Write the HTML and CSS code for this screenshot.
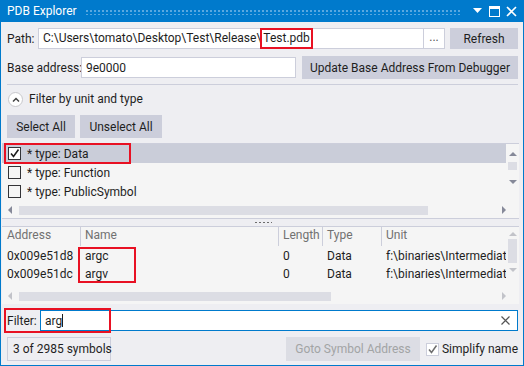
FILE: index.html
```html
<!DOCTYPE html>
<html lang="en">
<head>
    <meta charset="UTF-8">
    <title>PDB Explorer</title>
    <link rel="stylesheet" href="styles.css">
</head>
<body>
    <div class="window">
        <div class="titlebar">
            <span class="title">PDB Explorer</span>
            <span class="grip"></span>
            <span class="tb-icons">
                <svg width="11" height="6" viewBox="0 0 11 6"><path d="M1 0h9l-4.5 5z" fill="#fff"/></svg>
                <svg width="11" height="11" viewBox="0 0 11 11"><rect x="0.5" y="0.5" width="10" height="10" fill="none" stroke="#fff"/><rect x="0" y="0" width="11" height="3" fill="#fff"/></svg>
                <svg width="11" height="11" viewBox="0 0 11 11"><path d="M1 1l9 9M10 1l-9 9" stroke="#fff" stroke-width="1.6"/></svg>
            </span>
        </div>

        <div class="content">
            <div class="row row-path">
                <label class="lbl">Path:</label>
                <div class="textbox path-box">
                    <span class="tb-text">C:\Users\tomato\Desktop\Test\Release\<span class="mark">Test.pdb</span></span>
                    <span class="browse">...</span>
                </div>
                <button class="btn refresh">Refresh</button>
            </div>

            <div class="row row-base">
                <label class="lbl">Base address:</label>
                <div class="textbox base-box"><span class="tb-text">9e0000</span></div>
                <button class="btn update">Update Base Address From Debugger</button>
            </div>

            <div class="sep"></div>

            <div class="expander">
                <span class="exp-circle">
                    <svg width="8" height="5" viewBox="0 0 8 5"><path d="M1 4.5L4 1.5 7 4.5" fill="none" stroke="#444" stroke-width="1.5"/></svg>
                </span>
                <span>Filter by unit and type</span>
            </div>

            <div class="row row-btns">
                <button class="btn">Select All</button>
                <button class="btn">Unselect All</button>
            </div>
        </div>

        <div class="list types">
            <div class="list-body">
                <div class="list-rows">
                    <div class="item selected">
                        <span class="mark-row">
                            <span class="check on">
                                <svg width="11" height="11" viewBox="0 0 11 11"><path d="M2 5.5l2.5 3 5-7" fill="none" stroke="#1e1e1e" stroke-width="1.6"/></svg>
                            </span>
                            * type: Data
                        </span>
                    </div>
                    <div class="item"><span class="check"></span>* type: Function</div>
                    <div class="item"><span class="check"></span>* type: PublicSymbol</div>
                </div>
                <div class="vscroll">
                    <span class="arrow-up"></span>
                    <span class="vthumb small"></span>
                    <span class="vspace"></span>
                    <span class="arrow-down"></span>
                </div>
            </div>
            <div class="hscroll">
                <span class="arrow-left"></span>
                <span class="hthumb wide"></span>
                <span class="arrow-right"></span>
            </div>
        </div>

        <div class="splitter"><span class="dots"></span></div>

        <div class="list grid">
            <div class="list-body">
                <div class="list-rows">
                    <div class="grid-row head">
                        <span class="c-addr">Address</span>
                        <span class="c-name">Name</span>
                        <span class="c-len">Length</span>
                        <span class="c-type">Type</span>
                        <span class="c-unit">Unit</span>
                    </div>
                    <div class="grid-row">
                        <span class="c-addr">0x009e51d8</span>
                        <span class="c-name">argc</span>
                        <span class="c-len">0</span>
                        <span class="c-type">Data</span>
                        <span class="c-unit">f:\binaries\Intermediate</span>
                    </div>
                    <div class="grid-row">
                        <span class="c-addr">0x009e51dc</span>
                        <span class="c-name">argv</span>
                        <span class="c-len">0</span>
                        <span class="c-type">Data</span>
                        <span class="c-unit">f:\binaries\Intermediate</span>
                    </div>
                    <div class="name-mark"></div>
                </div>
                <div class="vscroll grid-v">
                    <span class="arrow-up light"></span>
                    <span class="vthumb tall"></span>
                    <span class="arrow-down light"></span>
                </div>
            </div>
            <div class="hscroll">
                <span class="arrow-left light"></span>
                <span class="hthumb short"></span>
                <span class="arrow-right light"></span>
            </div>
        </div>

        <div class="content bottom">
            <div class="row row-filter">
                <label class="lbl">Filter:</label>
                <div class="textbox filter-box">
                    <span class="tb-text">arg<span class="caret"></span></span>
                    <svg class="clear" width="9" height="9" viewBox="0 0 9 9"><path d="M0.5 0.5l8 8M8.5 0.5l-8 8" stroke="#555" stroke-width="1.2"/></svg>
                </div>
                <div class="filter-mark"></div>
            </div>
            <div class="row row-status">
                <span class="status">3 of 2985 symbols</span>
                <span class="spacer"></span>
                <button class="btn disabled">Goto Symbol Address</button>
                <label class="simplify">
                    <span class="check light">
                        <svg width="11" height="11" viewBox="0 0 11 11"><path d="M2 5.5l2.5 3 5-7" fill="none" stroke="#6d6d6d" stroke-width="1.5"/></svg>
                    </span>
                    Simplify name
                </label>
            </div>
        </div>
    </div>
</body>
</html>
```

FILE: styles.css
```css
html, body {
    margin: 0;
    padding: 0;
}
body {
    font-family: "Segoe UI", Roboto, sans-serif;
    font-size: 12px;
    color: #1e1e1e;
    background: #eeeef2;
}
.window {
    width: 524px;
    height: 366px;
    box-sizing: border-box;
    border: 1px solid #007acc;
    border-top: none;
    background: #eeeef2;
    display: flex;
    flex-direction: column;
    overflow: hidden;
}
.titlebar {
    height: 22px;
    background: #007acc;
    color: #fff;
    display: flex;
    align-items: center;
    padding: 0 6px 0 6px;
    flex-shrink: 0;
}
.title {
    font-size: 12px;
    line-height: 22px;
}
.grip {
    flex: 1;
    height: 5px;
    margin: 0 10px 0 9px;
    background-image: radial-gradient(circle at 1px 1px, #59a8e0 0.8px, transparent 1px);
    background-size: 4px 4px;
    position: relative;
    top: 1px;
}
.tb-icons {
    display: flex;
    align-items: center;
    gap: 6px;
}
.tb-icons svg {
    display: block;
}
.content {
    padding: 6px 5px 0 6px;
}
.row {
    display: flex;
    align-items: center;
}
.lbl {
    white-space: nowrap;
}
.textbox {
    background: #fff;
    border: 1px solid #cccedb;
    box-sizing: border-box;
    display: flex;
    align-items: center;
    white-space: nowrap;
    overflow: hidden;
}
.tb-text {
    padding-left: 4px;
    flex: 1;
    overflow: hidden;
}
.btn {
    font: inherit;
    color: #1e1e1e;
    background: #cccedb;
    border: none;
    padding: 0;
    white-space: nowrap;
    box-sizing: border-box;
}
.row-path {
    height: 21px;
}
.row-path .lbl {
    width: 31px;
    flex-shrink: 0;
}
.path-box {
    width: 407px;
    height: 21px;
    overflow: visible;
}
.path-box .tb-text {
    overflow: visible;
}
.mark {
    display: inline-block;
    line-height: 17px;
    padding: 0 1px;
    margin-left: 1px;
    outline: 2px solid #e81123;
}
.browse {
    width: 20px;
    height: 19px;
    border-left: 1px solid #cccedb;
    text-align: center;
    line-height: 16px;
    color: #555;
}
.refresh {
    width: 68px;
    height: 21px;
    margin-left: 5px;
}
.row-base {
    margin-top: 7px;
    height: 23px;
}
.row-base .lbl {
    width: 74px;
    flex-shrink: 0;
}
.base-box {
    width: 215px;
    height: 21px;
}
.update {
    width: 216px;
    height: 23px;
    margin-left: 6px;
}
.sep {
    height: 1px;
    background: #cccedb;
    margin-top: 5px;
}
.expander {
    display: flex;
    align-items: center;
    gap: 6px;
    height: 18px;
    margin-top: 5px;
    margin-left: 1px;
}
.exp-circle {
    width: 15px;
    height: 15px;
    border: 1px solid #c8c8cc;
    border-radius: 50%;
    background: #fff;
    display: flex;
    align-items: center;
    justify-content: center;
    box-sizing: border-box;
}
.exp-circle svg {
    display: block;
}
.row-btns {
    margin-top: 7px;
    gap: 5px;
}
.row-btns .btn {
    height: 23px;
    padding: 0 6px;
}
.row-btns .btn:first-child {
    width: 68px;
}
.row-btns .btn:last-child {
    width: 82px;
}
.list {
    margin: 0 4px 0 1px;
    background: #f5f5f5;
    display: flex;
    flex-direction: column;
    flex-shrink: 0;
}
.types {
    margin-top: 5px;
    border-top: 1px solid #cccedb;
    height: 74px;
}
.list-body {
    flex: 1;
    display: flex;
    min-height: 0;
}
.list-rows {
    flex: 1;
    position: relative;
}
.item {
    height: 19px;
    display: flex;
    align-items: center;
    padding-left: 6px;
    white-space: nowrap;
}
.item.selected {
    background: #cacdd9;
}
.mark-row {
    display: flex;
    align-items: center;
    height: 19px;
    width: 125px;
    margin-left: -3px;
    padding-left: 3px;
    box-sizing: border-box;
    outline: 2px solid #e81123;
    outline-offset: -1px;
}
.check {
    width: 13px;
    height: 13px;
    box-sizing: border-box;
    border: 1px solid #333337;
    background: #f5f5f5;
    display: inline-flex;
    align-items: center;
    justify-content: center;
    margin-right: 6px;
    flex-shrink: 0;
}
.check.on {
    background: #fff;
}
.check svg {
    display: block;
}
.vscroll {
    width: 13px;
    display: flex;
    flex-direction: column;
    align-items: center;
    padding-top: 8px;
}
.vspace {
    flex: 1;
}
.arrow-up, .arrow-down, .arrow-left, .arrow-right {
    width: 0;
    height: 0;
    border: 4px solid transparent;
    flex-shrink: 0;
}
.arrow-up {
    border-bottom: 4px solid #868999;
    border-top: 0;
}
.arrow-down {
    border-top: 4px solid #868999;
    border-bottom: 0;
    margin-bottom: 20px;
}
.arrow-left {
    border-right: 4px solid #868999;
    border-left: 0;
}
.arrow-right {
    border-left: 4px solid #868999;
    border-right: 0;
}
.light.arrow-up { border-bottom-color: #c2c3c9; }
.light.arrow-down { border-top-color: #c2c3c9; }
.light.arrow-left { border-right-color: #c2c3c9; }
.light.arrow-right { border-left-color: #c2c3c9; }
.vthumb {
    width: 9px;
    background: #dcdde4;
    margin-top: 6px;
}
.vthumb.small {
    height: 8px;
}
.hscroll {
    height: 12px;
    display: flex;
    align-items: center;
    padding: 0 13px 0 6px;
    margin-bottom: 2px;
    flex-shrink: 0;
}
.hthumb {
    height: 9px;
    background: #dcdde4;
    margin-left: 7px;
}
.hthumb.wide {
    width: 409px;
}
.hthumb.short {
    width: 312px;
}
.hscroll .arrow-right {
    margin-left: auto;
    margin-right: 0;
}
.splitter {
    height: 9px;
    border-top: 1px solid #cccedb;
    border-bottom: 1px solid #cccedb;
    box-sizing: border-box;
    margin: 0 4px 0 1px;
    position: relative;
    flex-shrink: 0;
}
.dots {
    position: absolute;
    left: 252px;
    top: 2px;
    width: 18px;
    height: 3px;
    background-image: radial-gradient(circle, #6d6d6d 0.9px, transparent 1.1px);
    background-size: 4px 3px;
}
.grid {
    height: 77px;
}
.grid-row {
    display: flex;
    height: 18px;
    align-items: center;
    white-space: nowrap;
}
.grid-row.head {
    height: 19px;
    color: #717171;
    margin-bottom: 1px;
}
.grid-row span {
    padding-left: 5px;
    box-sizing: border-box;
    overflow: hidden;
    flex-shrink: 0;
}
.grid-row.head span {
    border-left: 1px solid #cccedb;
    height: 19px;
    line-height: 16px;
    padding-left: 4px;
}
.grid-row.head span:first-child {
    border-left: none;
    padding-left: 5px;
}
.c-addr { width: 78px; }
.c-name { width: 198px; }
.c-len { width: 44px; }
.c-type { width: 59px; }
.c-unit { width: 125px; }
.name-mark {
    position: absolute;
    left: 76px;
    top: 20px;
    width: 58px;
    height: 36px;
    border: 2px solid #e81123;
    box-sizing: border-box;
}
.grid-v {
    padding-top: 5px;
}
.grid-v .vthumb.tall {
    height: 24px;
    margin-top: 3px;
    margin-bottom: 5px;
}
.grid-v .arrow-down {
    margin-bottom: 0;
}
.bottom {
    padding-top: 6px;
    padding-bottom: 5px;
}
.row-filter {
    height: 21px;
    position: relative;
}
.row-filter .lbl {
    width: 33px;
    flex-shrink: 0;
}
.filter-box {
    flex: 1;
    height: 21px;
    border-color: #007acc;
}
.caret {
    display: inline-block;
    width: 1px;
    height: 13px;
    background: #1e1e1e;
    vertical-align: -2px;
}
.clear {
    margin-right: 7px;
}
.filter-mark {
    position: absolute;
    left: -3px;
    top: -2px;
    width: 107px;
    height: 25px;
    border: 2px solid #e81123;
    box-sizing: border-box;
}
.row-status {
    margin-top: 6px;
    height: 24px;
}
.status {
    height: 24px;
    line-height: 22px;
    box-sizing: border-box;
    border: 1px solid #cccedb;
    padding: 0 5px;
    width: 104px;
    white-space: nowrap;
}
.spacer {
    flex: 1;
}
.btn.disabled {
    background: #dcdde4;
    color: #a2a4a5;
    width: 134px;
    height: 24px;
}
.simplify {
    display: flex;
    align-items: center;
    margin-left: 6px;
    white-space: nowrap;
}
.check.light {
    border-color: #cccedb;
    background: #fff;
    margin-right: 3px;
}
```
